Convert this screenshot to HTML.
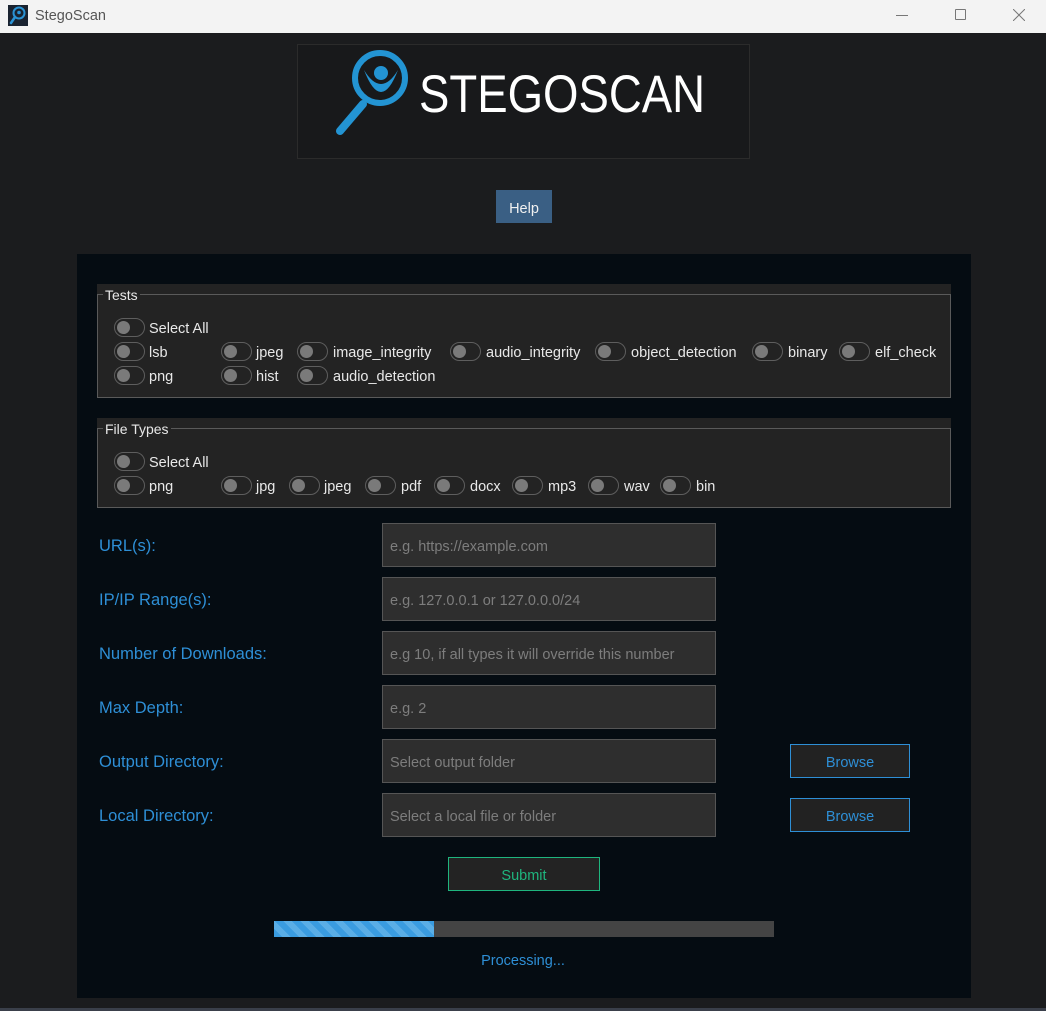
<!DOCTYPE html>
<html><head><meta charset="utf-8">
<style>
*{margin:0;padding:0;box-sizing:border-box}
body{width:1046px;height:1011px;background:#1b1c1e;position:relative;overflow:hidden;font-family:"Liberation Sans",sans-serif}
.a{position:absolute}
.title{left:0;top:0;width:1046px;height:33px;background:#f3f3f3}
.panel{left:77px;top:254px;width:894px;height:744px;background:#050c12}
.grp{background:#232323}
.fs{border:1px solid #5a5a5a}
.leg{color:#e8e8e8;font-size:14px;background:#232323;padding:0 2px}
.t{position:absolute;width:31px;height:19px;border:1px solid #5e5e5e;border-radius:10px}
.t::after{content:"";position:absolute;left:2px;top:2px;width:13px;height:13px;border-radius:50%;background:#7a7a7a}
.l{position:absolute;color:#e8e8e8;font-size:14.5px;line-height:19px;margin-top:2px}
.lab{position:absolute;left:99px;color:#2e8fd6;font-size:16.5px;margin-top:1px}
.inp{position:absolute;left:382px;width:334px;height:44px;background:#2e2e2e;border:1px solid #555;color:#7d7d7d;font-size:14.5px;padding-left:7px;padding-top:2px;line-height:42px}
.br{position:absolute;left:790px;width:120px;height:34px;background:#222;border:1px solid #2e8fd6;color:#2e8fd6;font-size:14.5px;text-align:center;line-height:32px;padding-top:2px}
</style></head><body>
<div class="a title">
  <svg class="a" style="left:8px;top:5px" width="20" height="21" viewBox="0 0 20 21"><rect width="20" height="21" fill="#1a2330"/><circle cx="11" cy="8" r="5.5" fill="none" stroke="#2a93d5" stroke-width="2"/><circle cx="11" cy="7.5" r="1.8" fill="#2a93d5"/><line x1="7" y1="12" x2="3" y2="18" stroke="#2a93d5" stroke-width="2.5" stroke-linecap="round"/></svg>
  <div class="a" style="left:35px;top:8px;font-size:14.5px;color:#555">StegoScan</div>
  <div class="a" style="left:896px;top:15px;width:12px;height:1px;background:#777"></div>
  <div class="a" style="left:955px;top:9px;width:11px;height:11px;border:1px solid #777;border-radius:1px"></div>
  <svg class="a" style="left:1013px;top:9px" width="12" height="12"><path d="M0 0L12 12M12 0L0 12" stroke="#777" stroke-width="1"/></svg>
</div>

<div class="a" style="left:297px;top:44px;width:453px;height:115px;border:1px solid #2b2b2b;background:#18191b"></div>
<svg class="a" style="left:320px;top:45px" width="400" height="100" viewBox="320 45 400 100">
  <circle cx="380" cy="78" r="25" fill="none" stroke="#2394d3" stroke-width="6"/>
  <line x1="363" y1="104" x2="340" y2="131" stroke="#2394d3" stroke-width="8" stroke-linecap="round"/>
  <circle cx="381" cy="73" r="7" fill="#2394d3"/>
  <path d="M364 70 Q381 114 398 70 Q381 98 364 70Z" fill="#2394d3"/>
  <text x="419" y="112" font-family="Liberation Sans,sans-serif" font-size="53" fill="#fff" textLength="286" lengthAdjust="spacingAndGlyphs">STEGOSCAN</text>
</svg>

<div class="a" style="left:496px;top:190px;width:56px;height:33px;background:#3a5f84;color:#f0f0f0;font-size:14.5px;text-align:center;line-height:33px;padding-top:3px">Help</div>

<div class="a panel"></div>

<div class="a grp" style="left:97px;top:284px;width:854px;height:114px"></div>
<div class="a fs" style="left:97px;top:294px;width:854px;height:104px"></div>
<div class="a leg" style="left:103px;top:287px">Tests</div>
<div class="t" style="left:114px;top:318px"></div><div class="l" style="left:149px;top:318px">Select All</div>
<div class="t" style="left:114px;top:342px"></div><div class="l" style="left:149px;top:342px">lsb</div>
<div class="t" style="left:221px;top:342px"></div><div class="l" style="left:256px;top:342px">jpeg</div>
<div class="t" style="left:297px;top:342px"></div><div class="l" style="left:333px;top:342px">image_integrity</div>
<div class="t" style="left:450px;top:342px"></div><div class="l" style="left:486px;top:342px">audio_integrity</div>
<div class="t" style="left:595px;top:342px"></div><div class="l" style="left:631px;top:342px">object_detection</div>
<div class="t" style="left:752px;top:342px"></div><div class="l" style="left:788px;top:342px">binary</div>
<div class="t" style="left:839px;top:342px"></div><div class="l" style="left:875px;top:342px">elf_check</div>
<div class="t" style="left:114px;top:366px"></div><div class="l" style="left:149px;top:366px">png</div>
<div class="t" style="left:221px;top:366px"></div><div class="l" style="left:256px;top:366px">hist</div>
<div class="t" style="left:297px;top:366px"></div><div class="l" style="left:333px;top:366px">audio_detection</div>

<div class="a grp" style="left:97px;top:418px;width:854px;height:90px"></div>
<div class="a fs" style="left:97px;top:428px;width:854px;height:80px"></div>
<div class="a leg" style="left:103px;top:421px">File Types</div>
<div class="t" style="left:114px;top:452px"></div><div class="l" style="left:149px;top:452px">Select All</div>
<div class="t" style="left:114px;top:476px"></div><div class="l" style="left:149px;top:476px">png</div>
<div class="t" style="left:221px;top:476px"></div><div class="l" style="left:256px;top:476px">jpg</div>
<div class="t" style="left:289px;top:476px"></div><div class="l" style="left:324px;top:476px">jpeg</div>
<div class="t" style="left:365px;top:476px"></div><div class="l" style="left:401px;top:476px">pdf</div>
<div class="t" style="left:434px;top:476px"></div><div class="l" style="left:470px;top:476px">docx</div>
<div class="t" style="left:512px;top:476px"></div><div class="l" style="left:548px;top:476px">mp3</div>
<div class="t" style="left:588px;top:476px"></div><div class="l" style="left:624px;top:476px">wav</div>
<div class="t" style="left:660px;top:476px"></div><div class="l" style="left:696px;top:476px">bin</div>

<div class="lab" style="top:536px">URL(s):</div>
<div class="inp" style="top:523px">e.g. https://example.com</div>
<div class="lab" style="top:590px">IP/IP Range(s):</div>
<div class="inp" style="top:577px">e.g. 127.0.0.1 or 127.0.0.0/24</div>
<div class="lab" style="top:644px">Number of Downloads:</div>
<div class="inp" style="top:631px">e.g 10, if all types it will override this number</div>
<div class="lab" style="top:698px">Max Depth:</div>
<div class="inp" style="top:685px">e.g. 2</div>
<div class="lab" style="top:752px">Output Directory:</div>
<div class="inp" style="top:739px">Select output folder</div>
<div class="br" style="top:744px">Browse</div>
<div class="lab" style="top:806px">Local Directory:</div>
<div class="inp" style="top:793px">Select a local file or folder</div>
<div class="br" style="top:798px">Browse</div>

<div class="a" style="left:448px;top:857px;width:152px;height:34px;background:#232323;border:1px solid #1fb57e;color:#1fb57e;font-size:14.5px;text-align:center;line-height:32px;padding-top:2px">Submit</div>

<div class="a" style="left:274px;top:921px;width:500px;height:16px;background:#444"></div>
<div class="a" style="left:274px;top:921px;width:160px;height:16px;background:repeating-linear-gradient(45deg,#3a9ce0 0 6px,#5aaee6 6px 12px)"></div>
<div class="a" style="left:0;top:953px;width:1046px;text-align:center;color:#2e8fd6;font-size:14.5px">Processing...</div>
<div class="a" style="left:0;top:1008px;width:1046px;height:3px;background:#3a3f4a"></div>
</body></html>
